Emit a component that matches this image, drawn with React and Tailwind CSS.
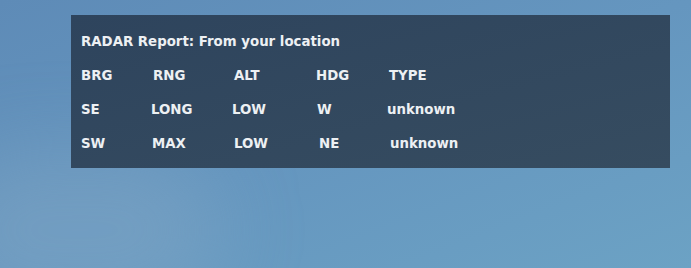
const rows = [
  [
    { t: 'BRG' },
    { t: 'RNG', c: 'ml-[1px]' },
    { t: 'ALT' },
    { t: 'HDG' },
    { t: 'TYPE' },
  ],
  [
    { t: 'SE' },
    { t: 'LONG', c: '-ml-[1px]' },
    { t: 'LOW', c: '-ml-[2px]' },
    { t: 'W', c: 'ml-[1px]' },
    { t: 'unknown', c: '-ml-[2px]' },
  ],
  [
    { t: 'SW' },
    { t: 'MAX' },
    { t: 'LOW' },
    { t: 'NE', c: 'ml-[3px]' },
    { t: 'unknown', c: 'ml-[1px]' },
  ],
];

export default function App() {
  return (
    <div
      className="relative w-[691px] h-[268px] overflow-hidden bg-gradient-to-br from-[#5e8bb7] via-[#6596bf] to-[#6ca2c4]"
      style={{ fontFamily: '"DejaVu Sans", Verdana, sans-serif' }}
    >
      {/* soft haze in the lower left of the sky */}
      <div className="absolute -left-[60px] top-[150px] w-[280px] h-[160px] rounded-full bg-[#86a9c6]/40 blur-[40px]" />

      <div className="relative pt-[15px] pl-[71px]">
        <div className="w-[599px] h-[153px] pt-[10px] pl-[10px] bg-gradient-to-br from-[#2e445d] to-[#364c60] text-[#edf0f3] text-[13.33px] font-bold">
          <div className="h-[34px] flex items-center">RADAR Report: From your location</div>
          {rows.map((row, i) => (
            <div key={i} className="h-[34px] grid grid-cols-[71px_82px_82px_73px_1fr] items-center">
              {row.map((cell, j) => (
                <span key={j} className={cell.c}>
                  {cell.t}
                </span>
              ))}
            </div>
          ))}
        </div>
      </div>
    </div>
  );
}
